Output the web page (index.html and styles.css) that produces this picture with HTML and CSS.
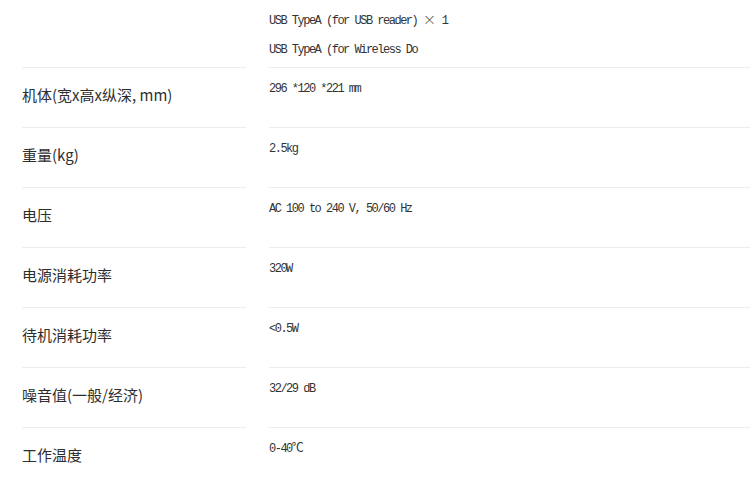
FILE: index.html
```
<!DOCTYPE html>
<html lang="zh">
<head>
<meta charset="utf-8">
<link rel="stylesheet" href="styles.css">
</head>
<body>
<div class="spec">
  <div class="row first">
    <div class="label"></div>
    <div class="value">
      <div>USB TypeA (for USB reader) <span class="times">×</span> 1</div>
      <div>USB TypeA (for Wireless Do</div>
    </div>
  </div>
  <div class="row">
    <div class="label">机体(宽x高x纵深, mm)</div>
    <div class="value">296 *120 *221 mm</div>
  </div>
  <div class="row">
    <div class="label">重量(kg)</div>
    <div class="value">2.5kg</div>
  </div>
  <div class="row">
    <div class="label">电压</div>
    <div class="value">AC 100 to 240 V, 50/60 Hz</div>
  </div>
  <div class="row">
    <div class="label">电源消耗功率</div>
    <div class="value">320W</div>
  </div>
  <div class="row">
    <div class="label">待机消耗功率</div>
    <div class="value">&lt;0.5W</div>
  </div>
  <div class="row">
    <div class="label">噪音值(一般/经济)</div>
    <div class="value">32/29 dB</div>
  </div>
  <div class="row">
    <div class="label">工作温度</div>
    <div class="value">0-40℃</div>
  </div>
</div>
</body>
</html>
```
FILE: styles.css
```
html, body {
  margin: 0;
  padding: 0;
  background: #fff;
}
.spec {
  padding-left: 22px;
  color: #333;
}
.row {
  display: grid;
  grid-template-columns: 224px 1fr;
  column-gap: 23px;
  height: 60px;
}
.row.first {
  height: 68px;
}
.label, .value {
  border-bottom: 1px solid #ededed;
}
.label {
  font-family: "Noto Sans CJK SC", "Noto Sans", sans-serif;
  font-size: 15px;
  line-height: 20px;
  padding-top: 17px;
  color: #2e2e2e;
}
.value {
  font-family: "Liberation Mono", "Noto Sans CJK SC", monospace;
  font-size: 12px;
  letter-spacing: -1.5px;
  line-height: 20px;
  padding-top: 11px;
  color: #333;
}
.first .value {
  padding-top: 4px;
  line-height: 29px;
}
.times {
  font-family: "Noto Sans CJK SC", sans-serif;
  font-weight: 300;
  font-size: 13px;
  letter-spacing: 0;
}
```
